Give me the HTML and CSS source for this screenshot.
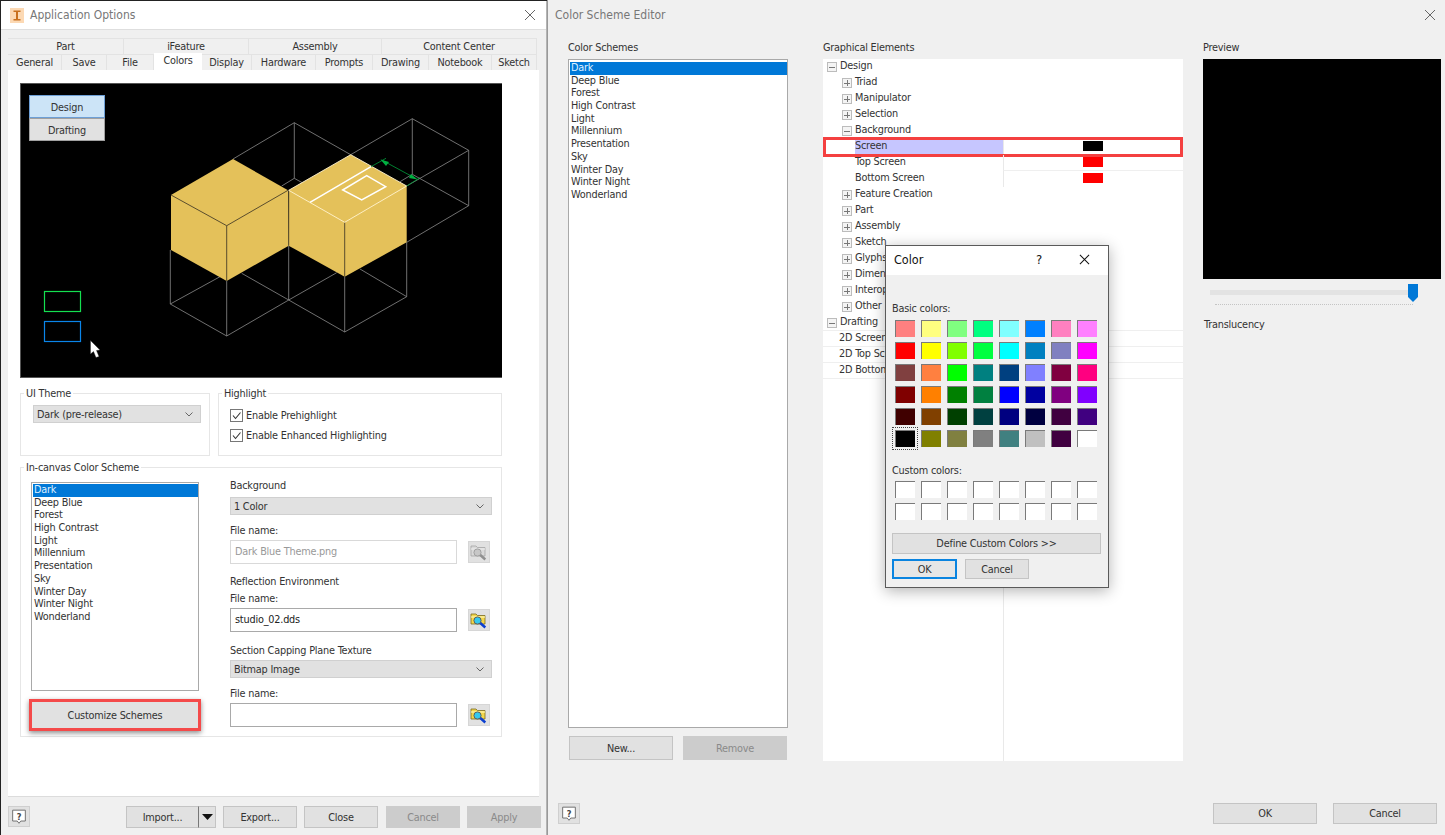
FILE: index.html
```html
<!DOCTYPE html>
<html lang="en">
<head>
<meta charset="utf-8">
<title>Application Options and Color Scheme Editor</title>
<link rel="stylesheet" href="styles.css">
</head>
<body>
<div class="desktop">

  <section class="win app">
    <header class="titlebar">
      <svg class="appicon" viewBox="0 0 14 15"><rect width="14" height="15" fill="#fcd9b4"/><path d="M3.5 2.5h7v1.6H8v6.8h2.5v1.6h-7v-1.6H6V4.100H3.500z" fill="#c8701f"/></svg>
      <span class="titletext">Application Options</span>
      <svg class="closex" viewBox="0 0 12 12"><path d="M1 1l10 10M11 1L1 11"/></svg>
    </header>

    <div class="tabs">
      <div class="tabrow top">
        <span class="tab">Part</span><span class="tab">iFeature</span><span class="tab">Assembly</span><span class="tab">Content Center</span>
      </div>
      <div class="tabrow bottom">
        <span class="tab">General</span><span class="tab">Save</span><span class="tab">File</span><span class="tab active">Colors</span><span class="tab">Display</span><span class="tab">Hardware</span><span class="tab">Prompts</span><span class="tab">Drawing</span><span class="tab">Notebook</span><span class="tab">Sketch</span>
      </div>
    </div>

    <div class="page">
      <div class="canvas">
        <svg class="scene" viewBox="20 83 482 295">
          <g class="wire">
            <path d="M233 159L294.300 122.700L350.700 154.700M294.300 122.700V178.300M281.700 186L294.300 178.300L303.300 183.300"/>
            <path d="M350.700 154.700L412.300 118.700L468.700 150.300L406.700 186M412.300 118.700V174.300M468.700 150.300V205.700L406.700 242.300M400 181.700L412.300 174.300L468.700 205.700"/>
            <path d="M170.300 250V304L226.700 336L288.700 300V245.700M170.300 304L220 276.700M226.700 281V336M241.700 273.300L288.700 300L344.700 332L406.700 296.700V242.300M288.700 300L336.700 272.700M344.700 276.700V332M360 269L406.700 296.700"/>
          </g>
          <path class="solid" d="M171 195L233 159L288 190.300L288.700 245.700L226.700 281L171 250z"/>
          <path class="solid" d="M288.700 190.300L350.700 154.700L406.700 186V242.300L344.700 276.700L288.700 245.700z"/>
          <path class="edge" d="M171 195L226.700 225.700L288 190.300M226.700 225.700V281M288.700 190.300V245.700M344.700 222.300V276.700"/>
          <path class="hi" d="M288.700 190.300L344.700 222.300L406.700 186L350.700 154.700z"/>
          <path class="sk" d="M310 202.300L371 166.700M342.700 190L366.700 175.700L385.700 186.700L361.700 200z"/>
          <path class="dim" d="M371 166.700L386 158.300M406.700 186L420 177.700M381.700 160L416.700 179"/>
          <path class="dimhead" d="M380.500 159.500L389 162L386 166zM417.500 179.500L409 178L411 174z"/>
          <rect class="rg" x="44.500" y="291.500" width="36" height="20"/>
          <rect class="rb" x="44.500" y="321.500" width="36" height="20"/>
          <path class="cur" d="M90.500 340.500V354L93.500 351.500L96 357.500L99 356.500L96.500 350.500L100 350z"/>
        </svg>
        <div class="modes">
          <span class="mode on">Design</span>
          <span class="mode">Drafting</span>
        </div>
      </div>

      <div class="grouprow">
        <fieldset class="group theme">
          <legend>UI Theme</legend>
          <div class="drop themedrop"><span>Dark (pre-release)</span><svg class="chev" viewBox="0 0 8 5"><path d="M.5.500L4 4L7.500.500"/></svg></div>
        </fieldset>
        <fieldset class="group hl">
          <legend>Highlight</legend>
          <div class="check"><svg class="cb" viewBox="0 0 13 13"><rect x=".5" y=".5" width="12" height="12"/><path d="M3 6.500L5.500 9.500L10.500 3.500"/></svg><span>Enable Prehighlight</span></div>
          <div class="check"><svg class="cb" viewBox="0 0 13 13"><rect x=".5" y=".5" width="12" height="12"/><path d="M3 6.500L5.500 9.500L10.500 3.500"/></svg><span>Enable Enhanced Highlighting</span></div>
        </fieldset>
      </div>

      <fieldset class="group scheme">
        <legend>In-canvas Color Scheme</legend>
        <div class="schemegrid">
          <div class="schemeleft">
            <ul class="list shortlist">
              <li class="sel">Dark</li><li>Deep Blue</li><li>Forest</li><li>High Contrast</li><li>Light</li><li>Millennium</li><li>Presentation</li><li>Sky</li><li>Winter Day</li><li>Winter Night</li><li>Wonderland</li>
            </ul>
            <div class="customize">Customize Schemes</div>
          </div>
          <div class="schemeright">
            <div class="lab">Background</div>
            <div class="drop d1"><span>1 Color</span><svg class="chev" viewBox="0 0 8 5"><path d="M.5.500L4 4L7.500.500"/></svg></div>
            <div class="lab fn">File name:</div>
            <div class="filerow"><div class="input off">Dark Blue Theme.png</div><span class="browse"><svg class="folder gray" viewBox="0 0 18 18"><use href="#folder"/></svg></span></div>
            <div class="lab refl">Reflection Environment</div>
            <div class="lab fn2">File name:</div>
            <div class="filerow"><div class="input">studio_02.dds</div><span class="browse"><svg class="folder" viewBox="0 0 18 18"><use href="#folder"/></svg></span></div>
            <div class="lab sect">Section Capping Plane Texture</div>
            <div class="drop d1"><span>Bitmap Image</span><svg class="chev" viewBox="0 0 8 5"><path d="M.5.500L4 4L7.500.500"/></svg></div>
            <div class="lab fn">File name:</div>
            <div class="filerow"><div class="input"></div><span class="browse"><svg class="folder" viewBox="0 0 18 18"><use href="#folder"/></svg></span></div>
          </div>
        </div>
      </fieldset>
    </div>

    <footer class="appfoot">
      <span class="helpbtn"><svg viewBox="0 0 22 21"><use href="#help"/><text x="11" y="14" class="helpq">?</text></svg></span>
      <div class="split"><span class="btn imp">Import...</span><span class="btn arrow"><svg viewBox="0 0 11 6"><path d="M0 0h11L5.500 6z"/></svg></span></div>
      <span class="btn w74 g7">Export...</span>
      <span class="btn w74 g7">Close</span>
      <span class="btn w74 g8 dis">Cancel</span>
      <span class="btn w74 g7 dis">Apply</span>
    </footer>
  </section>

  <section class="win editor">
    <header class="edtitle">
      <span class="titletext">Color Scheme Editor</span>
      <svg class="closex" viewBox="0 0 12 12"><path d="M1 1l10 10M11 1L1 11"/></svg>
    </header>
    <div class="edmain">
      <div class="edcol">
        <div class="collab">Color Schemes</div>
        <ul class="list longlist">
          <li class="sel">Dark</li><li>Deep Blue</li><li>Forest</li><li>High Contrast</li><li>Light</li><li>Millennium</li><li>Presentation</li><li>Sky</li><li>Winter Day</li><li>Winter Night</li><li>Wonderland</li>
        </ul>
        <div class="edbtns"><span class="btn w104">New...</span><span class="btn w104 dis">Remove</span></div>
      </div>
      <div class="edcol">
        <div class="collab">Graphical Elements</div>
        <div class="tree">
          <div class="row t1"><i class="exp minus"></i><span class="nm">Design</span></div>
          <div class="row t2"><i class="exp"></i><span class="nm">Triad</span></div>
          <div class="row t2"><i class="exp"></i><span class="nm">Manipulator</span></div>
          <div class="row t2"><i class="exp"></i><span class="nm">Selection</span></div>
          <div class="row t2"><i class="exp minus"></i><span class="nm">Background</span></div>
          <div class="row t3 pick"><span class="nm">Screen</span><span class="val"><b class="sw black"></b></span></div>
          <div class="row t3"><span class="nm">Top Screen</span><span class="val vline"><b class="sw red"></b></span></div>
          <div class="row t3"><span class="nm">Bottom Screen</span><span class="val"><b class="sw red"></b></span></div>
          <div class="row t2"><i class="exp"></i><span class="nm">Feature Creation</span></div>
          <div class="row t2"><i class="exp"></i><span class="nm">Part</span></div>
          <div class="row t2"><i class="exp"></i><span class="nm">Assembly</span></div>
          <div class="row t2"><i class="exp"></i><span class="nm">Sketch</span></div>
          <div class="row t2"><i class="exp"></i><span class="nm">Glyphs</span></div>
          <div class="row t2"><i class="exp"></i><span class="nm">Dimension</span></div>
          <div class="row t2"><i class="exp"></i><span class="nm">Interoperability</span></div>
          <div class="row t2"><i class="exp"></i><span class="nm">Other</span></div>
          <div class="row t1 lined"><i class="exp minus"></i><span class="nm">Drafting</span><span class="val"></span></div>
          <div class="row t1b lined"><span class="nm">2D Screen</span><span class="val"></span></div>
          <div class="row t1b lined"><span class="nm">2D Top Screen</span><span class="val"></span></div>
          <div class="row t1b lined"><span class="nm">2D Bottom Screen</span><span class="val"></span></div>
          <div class="treefill"></div>
        </div>
      </div>
      <div class="edcol">
        <div class="collab">Preview</div>
        <div class="preview"></div>
        <div class="slider"><div class="track"></div><div class="thumb"></div><div class="ticks"></div></div>
        <div class="transl">Translucency</div>
      </div>
    </div>
    <footer class="edfoot">
      <span class="helpbtn"><svg viewBox="0 0 22 21"><use href="#help"/><text x="11" y="14" class="helpq">?</text></svg></span>
      <div class="edok"><span class="btn w104 h20">OK</span><span class="btn w104 h20">Cancel</span></div>
    </footer>
  </section>
</div>

<div class="colordlg">
  <header class="dlgtitle">
    <span class="dlgname">Color</span>
    <span class="dlgq">?</span>
    <svg class="dlgx" viewBox="0 0 12 12"><path d="M1 1l10 10M11 1L1 11"/></svg>
  </header>
  <div class="dlgbody">
    <div class="dlglab basic">Basic colors:</div>
    <div class="swgrid">
      <b style="background:#ff8080"></b><b style="background:#ffff80"></b><b style="background:#80ff80"></b><b style="background:#00ff80"></b><b style="background:#80ffff"></b><b style="background:#0080ff"></b><b style="background:#ff80c0"></b><b style="background:#ff80ff"></b>
      <b style="background:#ff0000"></b><b style="background:#ffff00"></b><b style="background:#80ff00"></b><b style="background:#00ff40"></b><b style="background:#00ffff"></b><b style="background:#0080c0"></b><b style="background:#8080c0"></b><b style="background:#ff00ff"></b>
      <b style="background:#804040"></b><b style="background:#ff8040"></b><b style="background:#00ff00"></b><b style="background:#008080"></b><b style="background:#004080"></b><b style="background:#8080ff"></b><b style="background:#800040"></b><b style="background:#ff0080"></b>
      <b style="background:#800000"></b><b style="background:#ff8000"></b><b style="background:#008000"></b><b style="background:#008040"></b><b style="background:#0000ff"></b><b style="background:#0000a0"></b><b style="background:#800080"></b><b style="background:#8000ff"></b>
      <b style="background:#400000"></b><b style="background:#804000"></b><b style="background:#004000"></b><b style="background:#004040"></b><b style="background:#000080"></b><b style="background:#000040"></b><b style="background:#400040"></b><b style="background:#400080"></b>
      <b class="focus" style="background:#000000"></b><b style="background:#808000"></b><b style="background:#808040"></b><b style="background:#808080"></b><b style="background:#408080"></b><b style="background:#c0c0c0"></b><b style="background:#400040"></b><b style="background:#ffffff"></b>
    </div>
    <div class="dlglab custom">Custom colors:</div>
    <div class="swgrid blank">
      <b></b><b></b><b></b><b></b><b></b><b></b><b></b><b></b>
      <b></b><b></b><b></b><b></b><b></b><b></b><b></b><b></b>
    </div>
    <div class="btn define">Define Custom Colors &gt;&gt;</div>
    <div class="dlgbtns"><span class="btn okb">OK</span><span class="btn cancelb">Cancel</span></div>
  </div>
</div>

<svg class="defs" aria-hidden="true">
  <symbol id="folder" viewBox="0 0 18 18">
    <path d="M1 3h5l1.500 1.500H15V13H1z" fill="#f2d64b" stroke="#7a6a1e" stroke-width=".8"/>
    <path d="M1 6h14" stroke="#fff6b0" stroke-width="1.200"/>
    <circle cx="7.500" cy="9.500" r="3.600" fill="#35c9ee" stroke="#555" stroke-width=".9"/>
    <path d="M10.300 12l5 4.500" stroke="#0b3fd0" stroke-width="2.400"/>
  </symbol>
  <symbol id="help" viewBox="0 0 22 21">
    <path d="M4 3.500h14v12h-5l-2 2.500l-2-2.500H4z" fill="#fff" stroke="#666" stroke-width="1"/>
  </symbol>
</svg>
</body>
</html>
```

FILE: styles.css
```css
* { box-sizing: border-box; }
html, body { margin: 0; padding: 0; }
body {
  width: 1445px;
  height: 835px;
  overflow: hidden;
  position: relative;
  background: #222;
  font-family: "DejaVu Sans Condensed", "DejaVu Sans", sans-serif;
  font-stretch: condensed;
  font-size: 10.800px;
  letter-spacing: -0.2px;
  color: #333;
}
.defs { position: absolute; width: 0; height: 0; }
ul { list-style: none; margin: 0; padding: 0; }

.desktop { display: flex; height: 835px; padding-left: 1px; }
.win { display: flex; flex-direction: column; background: #f0f0f0; }
.app { width: 546px; margin-top: 1px; border-right: 1px solid #b4b4b4; flex: none; }
.editor { width: 898px; flex: none; border-left: 1px solid #999; }

.titlebar { height: 29px; background: #fff; display: flex; align-items: center; padding: 0 10px 0 9px; flex: none; border-bottom: 1px solid #dedede; }
.appicon { width: 14px; height: 15px; margin-right: 6px; }
.titletext { font-size: 12px; color: #777; letter-spacing: 0; }
.closex { width: 12px; height: 12px; margin-left: auto; fill: none; stroke: #666; stroke-width: 1; }

.tabs { margin: 8px 0 0 7px; width: 529px; flex: none; }
.tabrow { display: grid; height: 16px; }
.tabrow.top { grid-template-columns: 116px 125px 133px 155px; }
.tabrow.bottom { grid-template-columns: 54px 45px 47px 48px 50px 64px 57px 56px 63px 45px; }
.tab { background: #f0f0f0; border: 1px solid #e3e3e3; border-width: 1px 1px 0 0; text-align: center; line-height: 15px; color: #333; }
.tab.active { background: #fff; margin-top: -1px; height: 17px; position: relative; border: 0; line-height: 15px; }

.page { margin-left: 7px; width: 531px; height: 727px; background: #fff; padding: 13px 12px 0; flex: none; border-bottom: 1px solid #dcdcdc; }

.canvas { width: 482px; height: 295px; background: #000; position: relative; border: 1px solid #555; border-width: 1px 0 1px 1px; }
.scene { display: block; position: absolute; left: -1px; top: -1px; width: 482px; height: 295px; }
.wire path { fill: none; stroke: #8c8c8c; stroke-width: .8; }
.solid { fill: #e4c15a; }
.edge { fill: none; stroke: #4a4028; stroke-width: .9; }
.hi { fill: none; stroke: #fff3cf; stroke-width: .9; }
.sk { fill: none; stroke: #fff; stroke-width: 1.500; }
.dim { fill: none; stroke: #00a03c; stroke-width: .8; }
.dimhead { fill: #00b040; }
.rg { fill: none; stroke: #14e050; stroke-width: 1.200; }
.rb { fill: none; stroke: #0a85ea; stroke-width: 1.200; }
.cur { fill: #fff; stroke: #222; stroke-width: .4; }
.modes { position: absolute; left: 8px; top: 11px; width: 76px; display: flex; flex-direction: column; }
.mode { height: 23px; line-height: 23px; text-align: center; background: #e1e1e1; border: 1px solid #a0a0a0; color: #333; }
.mode.on { background: #cce4f7; border: 1px solid #6d9fd6; }

.grouprow { display: grid; grid-template-columns: 190px 284px; column-gap: 8px; margin-top: 9px; }
.group { margin: 0; padding: 0; min-width: 0; border: 1px solid #e6e6e6; }
.group legend { padding: 0 2px; line-height: 13px; color: #333; }
.theme legend { margin-left: -9px; }
.hl legend { margin-left: -8px; }
.scheme legend { margin-left: -7px; }
.theme { height: 69px; padding: 5px 0 0 12px; }
.hl { height: 69px; padding: 9px 0 0 11px; }
.drop { height: 18px; background: #e1e1e1; border: 1px solid #d0d0d0; display: flex; align-items: center; justify-content: space-between; padding: 0 7px 0 3px; color: #333; }
.themedrop { width: 168px; }
.chev { width: 8px; height: 5px; fill: none; stroke: #666; stroke-width: 1; }
.check { display: flex; align-items: center; height: 13px; margin-bottom: 7px; }
.cb { width: 13px; height: 13px; margin-right: 3px; flex: none; }
.cb rect { fill: #fff; stroke: #777; }
.cb path { fill: none; stroke: #333; stroke-width: 1.100; }

.scheme { margin-top: 5px; width: 482px; height: 276px; padding: 5px 9px 9px 10px; }
.schemegrid { display: grid; grid-template-columns: 168px 262px; column-gap: 31px; }
.schemeleft { padding-top: 3px; }
.list { background: #fff; border: 1px solid #a9a9a9; padding: 1px 0 0 1px; }
.list li { height: 12.700px; line-height: 12.700px; padding-left: 1px; color: #333; white-space: nowrap; }
.list li.sel { background: #0078d7; color: #dfefff; }
.shortlist { height: 209px; }
.customize { margin: 8px 0 0 -2px; width: 172px; height: 32px; border: 3px solid #f44a4a; background: #e1e1e1; text-align: center; line-height: 28px; color: #333; box-shadow: 0 2px 5px rgba(0,0,0,.45); }
.lab { height: 13px; line-height: 13px; color: #333; }
.d1 { margin-top: 5px; }
.lab.fn { margin-top: 9px; }
.lab.refl { margin-top: 11px; }
.lab.fn2 { margin-top: 4px; }
.lab.sect { margin-top: 12px; }
.lab.sect + .d1 { margin-top: 3px; }
.filerow { display: flex; align-items: center; margin-top: 3px; }
.input { width: 227px; height: 24px; background: #fff; border: 1px solid #a9a9a9; line-height: 22px; padding-left: 4px; color: #222; }
.input.off { border-color: #d9d9d9; color: #999; }
.browse { width: 22px; height: 22px; margin-left: 11px; background: #e1e1e1; border: 1px solid #d6d6d6; display: flex; align-items: center; justify-content: center; }
.folder { width: 18px; height: 18px; }
.folder.gray { filter: grayscale(1) opacity(.5); }

.btn { display: flex; align-items: center; justify-content: center; background: #e1e1e1; border: 1px solid #c4c4c4; color: #333; height: 22px; }
.btn.dis { background: #cccccc; border-color: #cccccc; color: #8a8a8a; }
.appfoot { display: flex; align-items: flex-start; padding: 9px 0 0 7px; }
.helpbtn { width: 22px; height: 21px; background: #e1e1e1; border: 1px solid #cfcfcf; display: block; flex: none; }
.helpbtn svg { display: block; width: 20px; height: 19px; }
.helpq { font-size: 10px; fill: #444; text-anchor: middle; font-weight: bold; }
.split { display: flex; margin-left: 96px; }
.imp { width: 73px; border-right: 1px solid #777; }
.arrow { width: 17px; border-left: 0; }
.arrow svg { width: 11px; height: 6px; fill: #111; }
.w74 { width: 74px; }
.g7 { margin-left: 7px; }
.g8 { margin-left: 8px; }

.edtitle { height: 28px; display: flex; align-items: center; padding: 2px 9px 0 7px; flex: none; }
.edmain { display: grid; grid-template-columns: 220px 360px 223px; column-gap: 35px; padding: 13px 0 0 20px; flex: none; }
.edmain .edcol:nth-child(3) { margin-left: -15px; }
.collab { height: 13px; line-height: 13px; margin-bottom: 5px; color: #333; }
.longlist { height: 669px; padding-top: 2px; }
.edbtns { display: flex; gap: 10px; margin: 8px 0 0 1px; }
.w104 { width: 104px; height: 24px; }
.h20 { height: 21px; }
.tree { height: 702px; background: #fff; display: flex; flex-direction: column; }
.row { height: 16px; line-height: 14px; display: flex; align-items: flex-start; position: relative; flex: none; color: #333; }
.row .nm { white-space: nowrap; flex: none; }
.t1 { padding-left: 4px; }
.t1b { padding-left: 16px; }
.t2 { padding-left: 19px; }
.t3 { padding-left: 32px; }
.t3 .nm { width: 148px; height: 16px; }
.t1 .nm { width: 151px; }
.t1b .nm { width: 164px; }
.val { width: 180px; height: 16px; border-left: 1px solid #e9e9e9; display: flex; justify-content: center; flex: none; padding-top: 2px; }
.vline { border-bottom: 1px solid #efefef; }
.lined { border-bottom: 1px solid #efefef; }
.pick .nm { background: #c6c6ff; }
.pick::after { content: ""; position: absolute; left: 0; right: 0; top: -2px; bottom: -2px; border: 3px solid #f44040; }
.sw { display: block; width: 20px; height: 10px; margin-right: 2px; }
.black { background: #000; }
.red { background: #f00; }
.exp { display: block; width: 10px; height: 10px; margin: 3px 3px 0 0; border: 1px solid #bcbcbc; background: linear-gradient(#777,#777) center/6px 1px no-repeat, linear-gradient(#777,#777) center/1px 6px no-repeat, #f4f4f4; flex: none; }
.exp.minus { background: linear-gradient(#777,#777) center/6px 1px no-repeat, #f4f4f4; }
.treefill { flex: 1; margin-left: 180px; border-left: 1px solid #e9e9e9; }

.preview { height: 220px; background: #000; }
.slider { position: relative; height: 26px; }
.track { position: absolute; left: 7px; top: 11px; width: 203px; height: 5px; background: #e3e3e3; }
.thumb { position: absolute; left: 205px; top: 5px; width: 10px; height: 18px; background: #0078d7; clip-path: polygon(0 0, 100% 0, 100% 72%, 50% 100%, 0 72%); }
.ticks { position: absolute; left: 12px; top: 25px; width: 198px; border-top: 1px dotted #c4c4c4; }
.transl { margin: 13px 0 0 1px; line-height: 13px; color: #333; }
.edfoot { margin-top: auto; height: 32px; padding: 0 8px 11px 10px; display: flex; justify-content: space-between; align-items: flex-end; }
.edok { display: flex; gap: 16px; }

.colordlg { position: absolute; left: 885px; top: 245px; width: 224px; height: 343px; background: #f0f0f0; border: 1px solid #5a5a5a; box-shadow: 0 3px 14px rgba(0,0,0,.3); }
.dlgtitle { height: 29px; background: #fff; display: flex; align-items: center; padding: 0 0 2px 8px; }
.dlgname { font-size: 12.500px; color: #111; letter-spacing: 0; }
.dlgq { position: absolute; left: 150px; top: 6px; font-size: 13px; color: #111; }
.dlgx { position: absolute; left: 193px; top: 8px; width: 11px; height: 11px; fill: none; stroke: #111; stroke-width: 1.100; }
.dlgbody { padding: 0 0 0 6px; }
.dlglab { line-height: 13px; color: #333; }
.basic { padding-top: 27px; }
.swgrid { display: grid; grid-template-columns: repeat(8, 20px); grid-auto-rows: 17px; column-gap: 6px; row-gap: 5px; margin: 5px 0 0 3px; }
.swgrid b { display: block; box-shadow: inset 1px 1px 0 #7a7a7a; position: relative; }
.swgrid.blank b { background: #fff; }
.focus { outline: 1px dotted #444; outline-offset: 2px; }
.custom { margin-top: 17px; }
.swgrid.blank { margin-top: 4px; }
.define { width: 209px; height: 21px; margin-top: 13px; }
.dlgbtns { display: flex; margin-top: 5px; gap: 8px; }
.okb { width: 65px; height: 20px; border: 2px solid #0a84e0; background: #e6e6e6; }
.cancelb { width: 64px; height: 20px; }
```
